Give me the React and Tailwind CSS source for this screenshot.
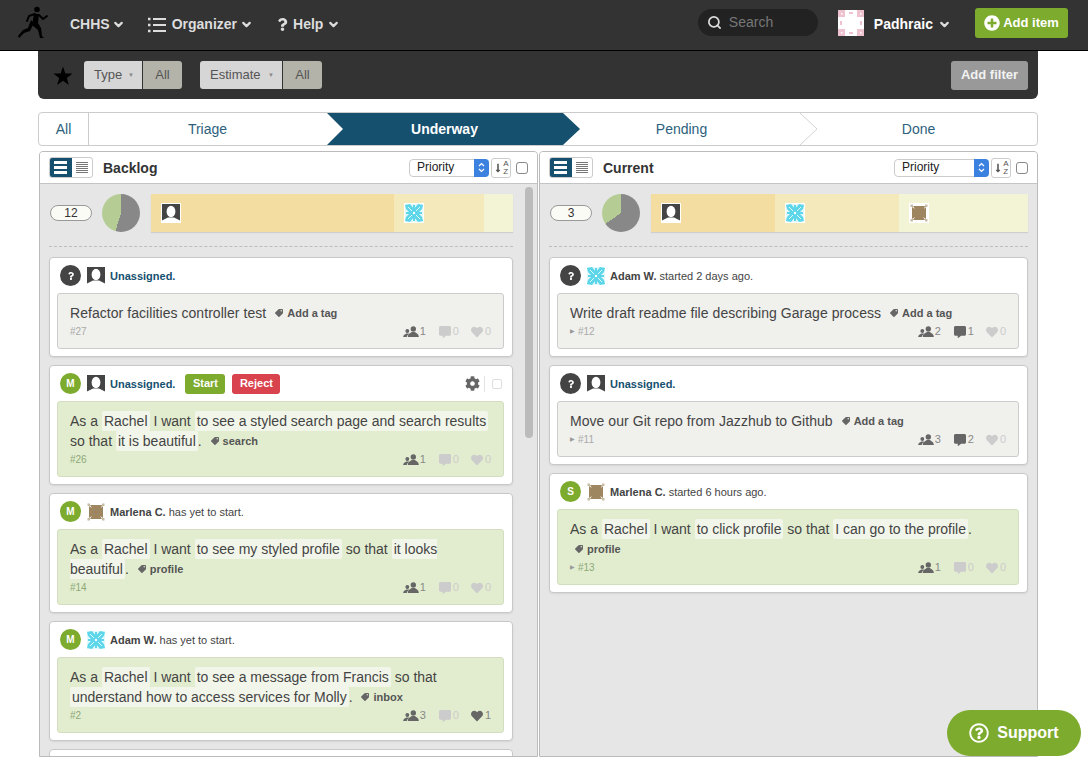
import React from 'react';
import { ChevronDown, Search } from 'lucide-react';
import { FaCog, FaCommentAlt, FaHeart, FaQuestion, FaTag, FaPlusCircle, FaRegQuestionCircle, FaLongArrowAltDown } from 'react-icons/fa';

const Runner = () => (
  <svg width="32" height="36" viewBox="0 0 32 36" className="shrink-0">
    <circle cx="20" cy="4.5" r="2.8" fill="#000" />
    <path d="M17 9 L22 9 L21 18 L24 23 L25 31 L27 33 L23 33 L21 25 L15 20 Z" fill="#000" />
    <path d="M17 18 L13 26 L7 28 L2 33 L1 31 L6 25 L11 23 L14 15 Z" fill="#000" />
    <path d="M18 9 L12 11 L10 16 M22 10 L26 14 L30 11" fill="none" stroke="#000" strokeWidth="2" strokeLinecap="round" strokeLinejoin="round" />
  </svg>
);

const Flake = ({ size = 18, color = '#5cd6e8', bg = '#fff' }) => (
  <svg width={size} height={size} viewBox="0 0 18 18" className="shrink-0">
    <rect width="18" height="18" fill={bg} />
    <rect width="18" height="18" fill="#5cd6e8" opacity="0.18" />
    <path d="M0 1 L5 0 L9 5 L13 0 L18 1 L17 5 L13 9 L17 13 L18 17 L13 18 L9 13 L5 18 L0 17 L1 13 L5 9 L1 5 Z" fill={color} />
    <path d="M9 1 V17 M1 9 H17" stroke={color} strokeWidth="2" />
    <path d="M3 3 L7 7 M15 3 L11 7 M3 15 L7 11 M15 15 L11 11" stroke="#fff" strokeWidth="0.8" />
    <circle cx="9" cy="9" r="1.2" fill="#fff" />
  </svg>
);

const Brown = ({ size = 18 }) => (
  <svg width={size} height={size} viewBox="0 0 18 18" className="shrink-0">
    <rect width="18" height="18" fill="#fff" />
    <path d="M3 2 H15 L14 5 L16 3 V15 L13 13 L15 16 H3 L5 13 L2 15 V3 L5 5 Z" fill="#9d8660" />
    <g fill="#9d8660" opacity="0.55">
      <rect x="0.5" y="0.5" width="2.5" height="2.5" />
      <rect x="15" y="0.5" width="2.5" height="2.5" />
      <rect x="0.5" y="15" width="2.5" height="2.5" />
      <rect x="15" y="15" width="2.5" height="2.5" />
    </g>
  </svg>
);

const Silhouette = ({ size = 18 }) => (
  <svg width={size} height={size} viewBox="0 0 18 18" className="shrink-0">
    <rect width="18" height="18" fill="#444" />
    <ellipse cx="9" cy="7.5" rx="4.4" ry="5.8" fill="#fff" />
    <path d="M0 16.5 L6 13.5 H12 L18 16.5 V18 H0 Z" fill="#fff" />
  </svg>
);

const PinkAvatar = () => (
  <svg width="26" height="26" viewBox="0 0 26 26" className="shrink-0">
    <rect width="26" height="26" fill="#fff" rx="2" />
    <g fill="#eec3cf">
      <rect x="0" y="0" width="7" height="7" />
      <rect x="19" y="0" width="7" height="7" />
      <rect x="0" y="19" width="7" height="7" />
      <rect x="19" y="19" width="7" height="7" />
      <path d="M11 2 H15 V4 H11 Z M2 11 H4 V15 H2 Z M22 11 H24 V15 H22 Z M11 22 H15 V24 H11 Z" />
    </g>
    <g fill="#fff">
      <rect x="3" y="3" width="1.5" height="1.5" />
      <rect x="22" y="3" width="1.5" height="1.5" />
      <rect x="3" y="22" width="1.5" height="1.5" />
      <rect x="22" y="22" width="1.5" height="1.5" />
    </g>
  </svg>
);

const Chevron = ({ className = '' }) => <ChevronDown size={13} strokeWidth={4} className={className} />;

const ListIcons = () => (
  <div className="flex h-[21px] w-[44px] overflow-hidden rounded-[3px] border border-[#ccc]">
    <div className="-my-px -ml-px flex w-[23px] flex-col justify-center gap-[2px] bg-[#15506f] px-[5px]">
      <div className="h-[3px] bg-white" />
      <div className="h-[3px] bg-white" />
      <div className="h-[3px] bg-white" />
    </div>
    <div className="flex flex-1 flex-col justify-center gap-px px-[4px]">
      {[0, 1, 2, 3, 4, 5].map((i) => (
        <div key={i} className="h-px bg-[#777]" />
      ))}
    </div>
  </div>
);

const SortControls = ({ selectWidth }) => (
  <div className="ml-auto flex items-center">
    <div className={`flex h-[18px] ${selectWidth} items-center rounded-[4px] border border-[#ccc] bg-white pl-[7px] text-[12px] text-[#222]`}>
      <span className="pb-[1px]">Priority</span>
      <div className="-mr-px ml-auto flex h-[18px] w-[15px] items-center justify-center rounded-r-[4px] bg-[#3b82e0]">
        <svg width="7" height="11" viewBox="0 0 7 11">
          <path d="M1 4 L3.5 1.5 L6 4 M1 7 L3.5 9.5 L6 7" fill="none" stroke="#fff" strokeWidth="1.2" />
        </svg>
      </div>
    </div>
    <div className="ml-[2px] flex h-[20px] w-[20px] items-center justify-center rounded-[3px] border border-[#ccc] bg-white text-[#555]">
      <FaLongArrowAltDown size={10} />
      <div className="flex flex-col text-[8px] leading-[8px]">
        <span>A</span>
        <span>Z</span>
      </div>
    </div>
    <div className="ml-[5px] h-[12px] w-[12px] rounded-[3px] border border-[#888] bg-white" />
  </div>
);

const Hl = ({ children }) => (
  <span className="rounded-[2px] bg-[#f2f6ea] px-[2px] py-[2px]">{children}</span>
);

const Tag = ({ children }) => (
  <span className="ml-[5px] inline-flex items-center gap-[4px] align-[1px] text-[11px] font-bold tracking-normal text-[#555]">
    <FaTag size={8} className="-scale-x-100 text-[#666]" />
    {children}
  </span>
);

const Stat = ({ icon: Icon, value, size = 12 }) => (
  <span className={`flex items-center gap-[2px] ${value > 0 ? 'text-[#666]' : 'text-[#ccc]'}`}>
    <Icon size={size} />
    <span className={`text-[11px] ${value > 0 ? 'text-[#888]' : 'text-[#ccc]'}`}>{value}</span>
  </span>
);

const People = ({ value }) => (
  <span className="flex items-center gap-[1px] text-[#666]">
    <svg width="16" height="12" viewBox="0 0 17 13" fill="#666">
      <circle cx="11" cy="3.2" r="2.9" />
      <path d="M5 12 C5 8.5 8 7.5 9.5 6.5 H12.5 C14 7.5 17 8.5 17 12 Z" />
      <circle cx="4.5" cy="5.4" r="2.1" />
      <path d="M0 12 C0 9.6 2 9 3.3 8 H5.8 L6.8 8.6 C5 9.4 4 10.5 3.8 12 Z" />
    </svg>
    <span className="text-[11px] text-[#888]">{value}</span>
  </span>
);

const Card = ({ badge, badgeColor, avatar, who, whoRest, actions, green, tri, id, people, comments = 0, hearts = 0, children }) => (
  <div className="rounded-[4px] border border-[#c8c8c8] bg-white pb-[7px] pl-[7px] pr-[8px] pt-[7px] shadow-[0_1px_2px_rgba(0,0,0,0.08)]">
    <div className="mb-[7px] ml-[3px] flex h-[21px] items-center">
      <div className={`flex h-[21px] w-[21px] items-center justify-center rounded-full ${badgeColor} text-[10px] font-bold text-white`}>
        {badge === '?' ? <FaQuestion size={8} /> : badge}
      </div>
      <div className="ml-[6px] mr-[5px]">{avatar}</div>
      <span className="pt-[1px] text-[11px] text-[#444]">
        <b className={who === 'Unassigned.' ? 'text-[#15506f]' : 'text-[#444]'}>{who}</b>
        {whoRest ? ` ${whoRest}` : ''}
      </span>
      {actions}
    </div>
    <div className={`rounded-[3px] border px-[12px] pb-[9px] pt-[9px] ${green ? 'border-[#d3dec0] bg-[#e2edcf]' : 'border-[#ccc] bg-[#f0f0ed]'}`}>
      <div className={`-mr-[6px] text-[14px] leading-[20px] text-[#444] ${green ? '' : 'tracking-[0.05px]'}`}>{children}</div>
      <div className="mt-[1px] flex h-[15px] items-center justify-between">
        <span className={`flex items-center gap-[3px] text-[10px] ${green ? 'text-[#8da878]' : 'text-[#aaa]'}`}>
          {tri && <span className="text-[6px] text-[#999]">▶</span>}
          {id}
        </span>
        <div className="flex items-center gap-[12px]">
          <span className="mr-[1px]"><People value={people} /></span>
          <Stat icon={FaCommentAlt} value={comments} />
          <Stat icon={FaHeart} value={hearts} />
        </div>
      </div>
    </div>
  </div>
);

const Summary = ({ count, pie, children }) => (
  <div className="flex items-center">
    <div className="ml-[1px] flex h-[16px] w-[42px] items-center justify-center rounded-full border border-[#999] bg-[#fbfbf6] text-[12px] text-[#333]">
      {count}
    </div>
    <div className={`ml-[10px] h-[38px] w-[38px] rounded-full ${pie}`} />
    <div className="ml-[11px] flex h-[38px] flex-1 shadow-[0_1px_1px_rgba(0,0,0,0.1)]">{children}</div>
  </div>
);

const Segment = ({ className, children }) => (
  <div className={`flex items-center pl-[10px] ${className}`}>
    {children && <div className="border border-white">{children}</div>}
  </div>
);

const Column = ({ title, selectWidth, padRight, summary, children, scroll }) => (
  <div className="relative h-[606px] w-[499px] overflow-hidden rounded-t-[4px] border border-[#bbb] bg-[#e6e6e6]">
    <div className="flex h-[32px] items-center border-b border-[#c4c4c4] bg-white pl-[9px] pr-[9px]">
      <ListIcons />
      <span className="ml-[10px] pt-[1px] text-[14px] font-bold text-[#333]">{title}</span>
      <SortControls selectWidth={selectWidth} />
    </div>
    <div className={`pl-[9px] pt-[10px] ${padRight}`}>
      {summary}
      <div className="mb-[10px] mt-[14px] border-t border-dashed border-[#bdbdbd]" />
      <div className="flex flex-col gap-[8px]">{children}</div>
    </div>
    {scroll && <div className="absolute left-[485px] top-[35px] h-[251px] w-[8px] rounded-full bg-[#bbb]" />}
  </div>
);

const FilterChip = ({ label, width }) => (
  <div className="flex h-[28px] text-[13px]">
    <div className={`flex ${width} items-center justify-between rounded-l-[3px] bg-[#d6d6d6] pl-[10px] pr-[8px] text-[#555]`}>
      {label}
      <span className="text-[6px] text-[#888]">▼</span>
    </div>
    <div className="ml-px flex w-[39px] items-center justify-center rounded-r-[3px] bg-[#b3b3aa] text-[#555]">All</div>
  </div>
);

export default function App() {
  return (
    <div className="relative h-[760px] w-[1088px] overflow-hidden bg-white font-['Liberation_Sans',Arial,sans-serif]">
      <header className="flex h-[51px] items-center border-b border-black bg-[#333] pb-[5px] pl-[17px] pr-[20px] text-[14px] font-bold text-[#ddd]">
        <Runner />
        <div className="ml-[21px] flex items-center pt-[4px]">
          <span>CHHS</span>
          <Chevron className="ml-[2px]" />
          <svg width="18" height="16" viewBox="0 0 18 16" className="ml-[23px]">
            <path d="M5 2 H18 M5 8 H18 M5 14 H18" stroke="#ddd" strokeWidth="2" />
            <path d="M0 2 H2.5 M0 8 H2.5 M0 14 H2.5" stroke="#ddd" strokeWidth="2.5" />
          </svg>
          <span className="ml-[6px]">Organizer</span>
          <Chevron className="ml-[3px]" />
          <FaQuestion size={13} className="ml-[23px]" />
          <span className="ml-[4px]">Help</span>
          <Chevron className="ml-[4px]" />
        </div>
        <div className="ml-auto flex h-[27px] w-[120px] items-center rounded-full bg-[#222] pl-[9px] text-[14px] font-normal text-[#777]">
          <Search size={15} strokeWidth={2.75} className="text-[#ddd]" />
          <span className="ml-[7px]">Search</span>
        </div>
        <div className="ml-[20px]"><PinkAvatar /></div>
        <div className="flex items-center pt-[4px]">
          <span className="ml-[10px] text-white">Padhraic</span>
          <Chevron className="ml-[5px]" />
        </div>
        <button className="ml-[24px] flex h-[30px] w-[93px] items-center justify-center gap-[3px] rounded-[3px] bg-[#7dab2e] text-[13px] font-bold text-white">
          <FaPlusCircle size={16} />
          Add item
        </button>
      </header>

      <div className="ml-[38px] flex h-[48px] w-[1000px] items-center rounded-b-[6px] bg-[#333] pl-[15px] pr-[10px]">
        <svg width="20" height="20" viewBox="0 0 20 20" className="mt-[1px]">
          <path d="M10 0.5 L12.4 7.4 L19.6 7.5 L13.8 11.9 L15.9 18.9 L10 14.7 L4.1 18.9 L6.2 11.9 L0.4 7.5 L7.6 7.4 Z" fill="#000" />
        </svg>
        <div className="ml-[11px]"><FilterChip label="Type" width="w-[58px]" /></div>
        <div className="ml-[18px]"><FilterChip label="Estimate" width="w-[82px]" /></div>
        <button className="ml-auto h-[29px] w-[77px] rounded-[3px] bg-[#999] text-[13px] font-bold text-[#f2f2f2]">Add filter</button>
      </div>

      <nav className="relative ml-[38px] mt-[13px] flex h-[34px] w-[1000px] rounded-[4px] border border-[#ccc] text-[14px] text-[#2d5f7d]">
        <svg width="253" height="32" viewBox="0 0 253 32" className="absolute left-[288px] top-0">
          <path d="M0 0 H236 L253 16 L236 32 H0 L16 16 Z" fill="#15506f" />
        </svg>
        <svg width="18" height="32" viewBox="0 0 18 32" className="absolute left-[761px] top-0">
          <path d="M0 0 L17 16 L0 32" fill="none" stroke="#d4d4d4" />
        </svg>
        <div className="flex w-[50px] items-center justify-center border-r border-[#ccc]">All</div>
        <div className="flex w-[237px] items-center justify-center">Triage</div>
        <div className="relative flex w-[237px] items-center justify-center font-bold text-white">Underway</div>
        <div className="flex w-[237px] items-center justify-center">Pending</div>
        <div className="flex flex-1 items-center justify-center">Done</div>
      </nav>

      <main className="ml-[39px] mt-[5px] flex gap-[1px]">
        <Column
          title="Backlog"
          selectWidth="w-[80px]"
          padRight="pr-[24px]"
          scroll
          summary={
            <Summary count="12" pie="bg-[conic-gradient(#888_0deg_197deg,#b5cd95_197deg_360deg)]">
              <Segment className="w-[243px] bg-[#f3dda0]"><Silhouette /></Segment>
              <Segment className="w-[90px] bg-[#f3e9ba]"><Flake /></Segment>
              <Segment className="flex-1 bg-[#f3f3d6]" />
            </Summary>
          }
        >
          <Card badge="?" badgeColor="bg-[#444]" avatar={<Silhouette />} who="Unassigned." id="#27" people={1}>
            Refactor facilities controller test <Tag>Add a tag</Tag>
          </Card>
          <Card
            badge="M"
            badgeColor="bg-[#7dab2e]"
            avatar={<Silhouette />}
            who="Unassigned."
            green
            id="#26"
            people={1}
            actions={
              <>
                <span className="ml-[10px] flex h-[20px] w-[40px] items-center justify-center rounded-[3px] bg-[#7dab2e] text-[11px] font-bold text-white">Start</span>
                <span className="ml-[7px] flex h-[20px] w-[48px] items-center justify-center rounded-[3px] bg-[#d9434e] text-[11px] font-bold text-white">Reject</span>
                <FaCog size={15} className="ml-auto text-[#666]" />
                <span className="ml-[4px] h-[16px] border-l border-[#e4e4e4]" />
                <span className="ml-[7px] mr-[2px] h-[10px] w-[10px] rounded-[2px] border border-[#ddd]" />
              </>
            }
          >
            As a <Hl>Rachel</Hl> I want <Hl>to see a styled search page and search results</Hl> so that <Hl>it is beautiful</Hl>. <Tag>search</Tag>
          </Card>
          <Card badge="M" badgeColor="bg-[#7dab2e]" avatar={<Brown />} who="Marlena C." whoRest="has yet to start." green id="#14" people={1}>
            As a <Hl>Rachel</Hl> I want <Hl>to see my styled profile</Hl> so that <Hl>it looks beautiful</Hl>. <Tag>profile</Tag>
          </Card>
          <Card badge="M" badgeColor="bg-[#7dab2e]" avatar={<Flake />} who="Adam W." whoRest="has yet to start." green id="#2" people={3} hearts={1}>
            As a <Hl>Rachel</Hl> I want <Hl>to see a message from Francis</Hl> so that <Hl>understand how to access services for Molly</Hl>. <Tag>inbox</Tag>
          </Card>
          <div className="h-[40px] rounded-[4px] border border-[#c8c8c8] bg-white" />
        </Column>

        <Column
          title="Current"
          selectWidth="w-[95px]"
          padRight="pr-[9px]"
          summary={
            <Summary count="3" pie="bg-[conic-gradient(#888_0deg_235deg,#b5cd95_235deg_360deg)]">
              <Segment className="w-[124px] bg-[#f3dda0]"><Silhouette /></Segment>
              <Segment className="w-[124px] bg-[#f3e9ba]"><Flake /></Segment>
              <Segment className="flex-1 bg-[#f3f3d6]"><Brown /></Segment>
            </Summary>
          }
        >
          <Card badge="?" badgeColor="bg-[#444]" avatar={<Flake />} who="Adam W." whoRest="started 2 days ago." tri id="#12" people={2} comments={1}>
            Write draft readme file describing Garage process <Tag>Add a tag</Tag>
          </Card>
          <Card badge="?" badgeColor="bg-[#444]" avatar={<Silhouette />} who="Unassigned." tri id="#11" people={3} comments={2}>
            Move our Git repo from Jazzhub to Github <Tag>Add a tag</Tag>
          </Card>
          <Card badge="S" badgeColor="bg-[#7dab2e]" avatar={<Brown />} who="Marlena C." whoRest="started 6 hours ago." green tri id="#13" people={1}>
            As a <Hl>Rachel</Hl> I want <Hl>to click profile</Hl> so that <Hl>I can go to the profile</Hl>. <Tag>profile</Tag>
          </Card>
        </Column>
      </main>

      <button className="absolute left-[947px] top-[710px] flex h-[46px] w-[134px] items-center justify-center gap-[8px] rounded-full bg-[#7dab2e] text-[16px] font-bold text-white">
        <FaRegQuestionCircle size={20} />
        Support
      </button>
    </div>
  );
}
